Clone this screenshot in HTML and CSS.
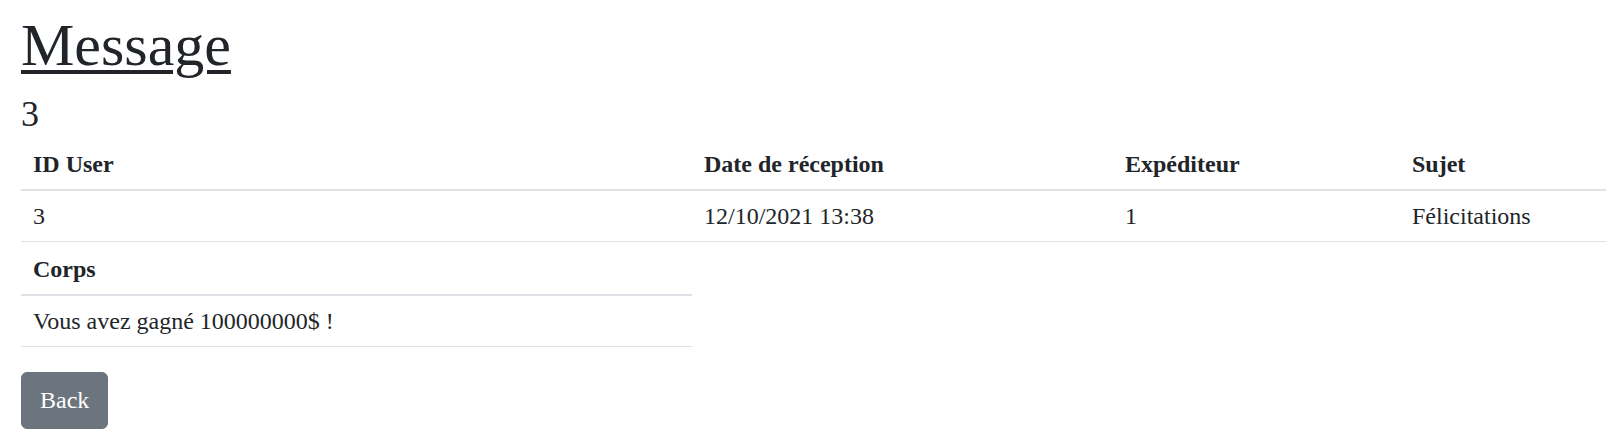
FILE: index.html
```html
<!DOCTYPE html>
<html lang="fr">
<head>
<meta charset="utf-8">
<title>Message</title>
<link rel="stylesheet" href="styles.css">
</head>
<body>
<main class="page">
  <h1 class="title"><a href="#" class="title-link">Message</a></h1>
  <h4 class="msg-id">3</h4>
  <table class="table table-main">
    <colgroup>
      <col class="c1"><col class="c2"><col class="c3"><col class="c4">
    </colgroup>
    <thead>
      <tr><th>ID User</th><th>Date de réception</th><th>Expéditeur</th><th>Sujet</th></tr>
    </thead>
    <tbody>
      <tr><td>3</td><td>12/10/2021 13:38</td><td>1</td><td>Félicitations</td></tr>
    </tbody>
  </table>
  <table class="table table-body">
    <thead>
      <tr><th>Corps</th></tr>
    </thead>
    <tbody>
      <tr><td>Vous avez gagné 100000000$ !</td></tr>
    </tbody>
  </table>
  <a href="#" class="btn">Back</a>
</main>
</body>
</html>
```

FILE: styles.css
```css
html, body {
  margin: 0;
  padding: 0;
  background: #fff;
  overflow: hidden;
}

body {
  font-family: "Liberation Serif", "Times New Roman", serif;
  color: #212529;
  font-size: 24px;
}

.page {
  padding-left: 21px;
}

.title {
  margin: 9px 0 12px;
  font-size: 60px;
  line-height: 72px;
  font-weight: 400;
}

.title-link {
  color: #212529;
  text-decoration: underline;
  text-decoration-thickness: 4px;
  text-underline-offset: 5px;
}

.msg-id {
  margin: 0 0 3px;
  font-size: 36px;
  line-height: 43px;
  font-weight: 400;
}

.table {
  border-collapse: collapse;
  table-layout: fixed;
}

.table th,
.table td {
  padding: 12px;
  line-height: 26px;
  text-align: left;
  vertical-align: top;
  border-bottom: 1px solid #dee2e6;
}

.table th {
  font-weight: 700;
  border-bottom-width: 2px;
}

.table-main {
  width: 1585px;
}

.c1 { width: 671px; }
.c2 { width: 421px; }
.c3 { width: 287px; }
.c4 { width: 206px; }

.table-body {
  width: 671px;
  margin-top: 2px;
}

.btn {
  display: inline-block;
  margin-top: 25px;
  padding: 9px 18px;
  line-height: 37px;
  font-size: 24px;
  color: #fff;
  background: #6c757d;
  border: 1px solid #6c757d;
  border-radius: 6px;
  text-decoration: none;
}
```
